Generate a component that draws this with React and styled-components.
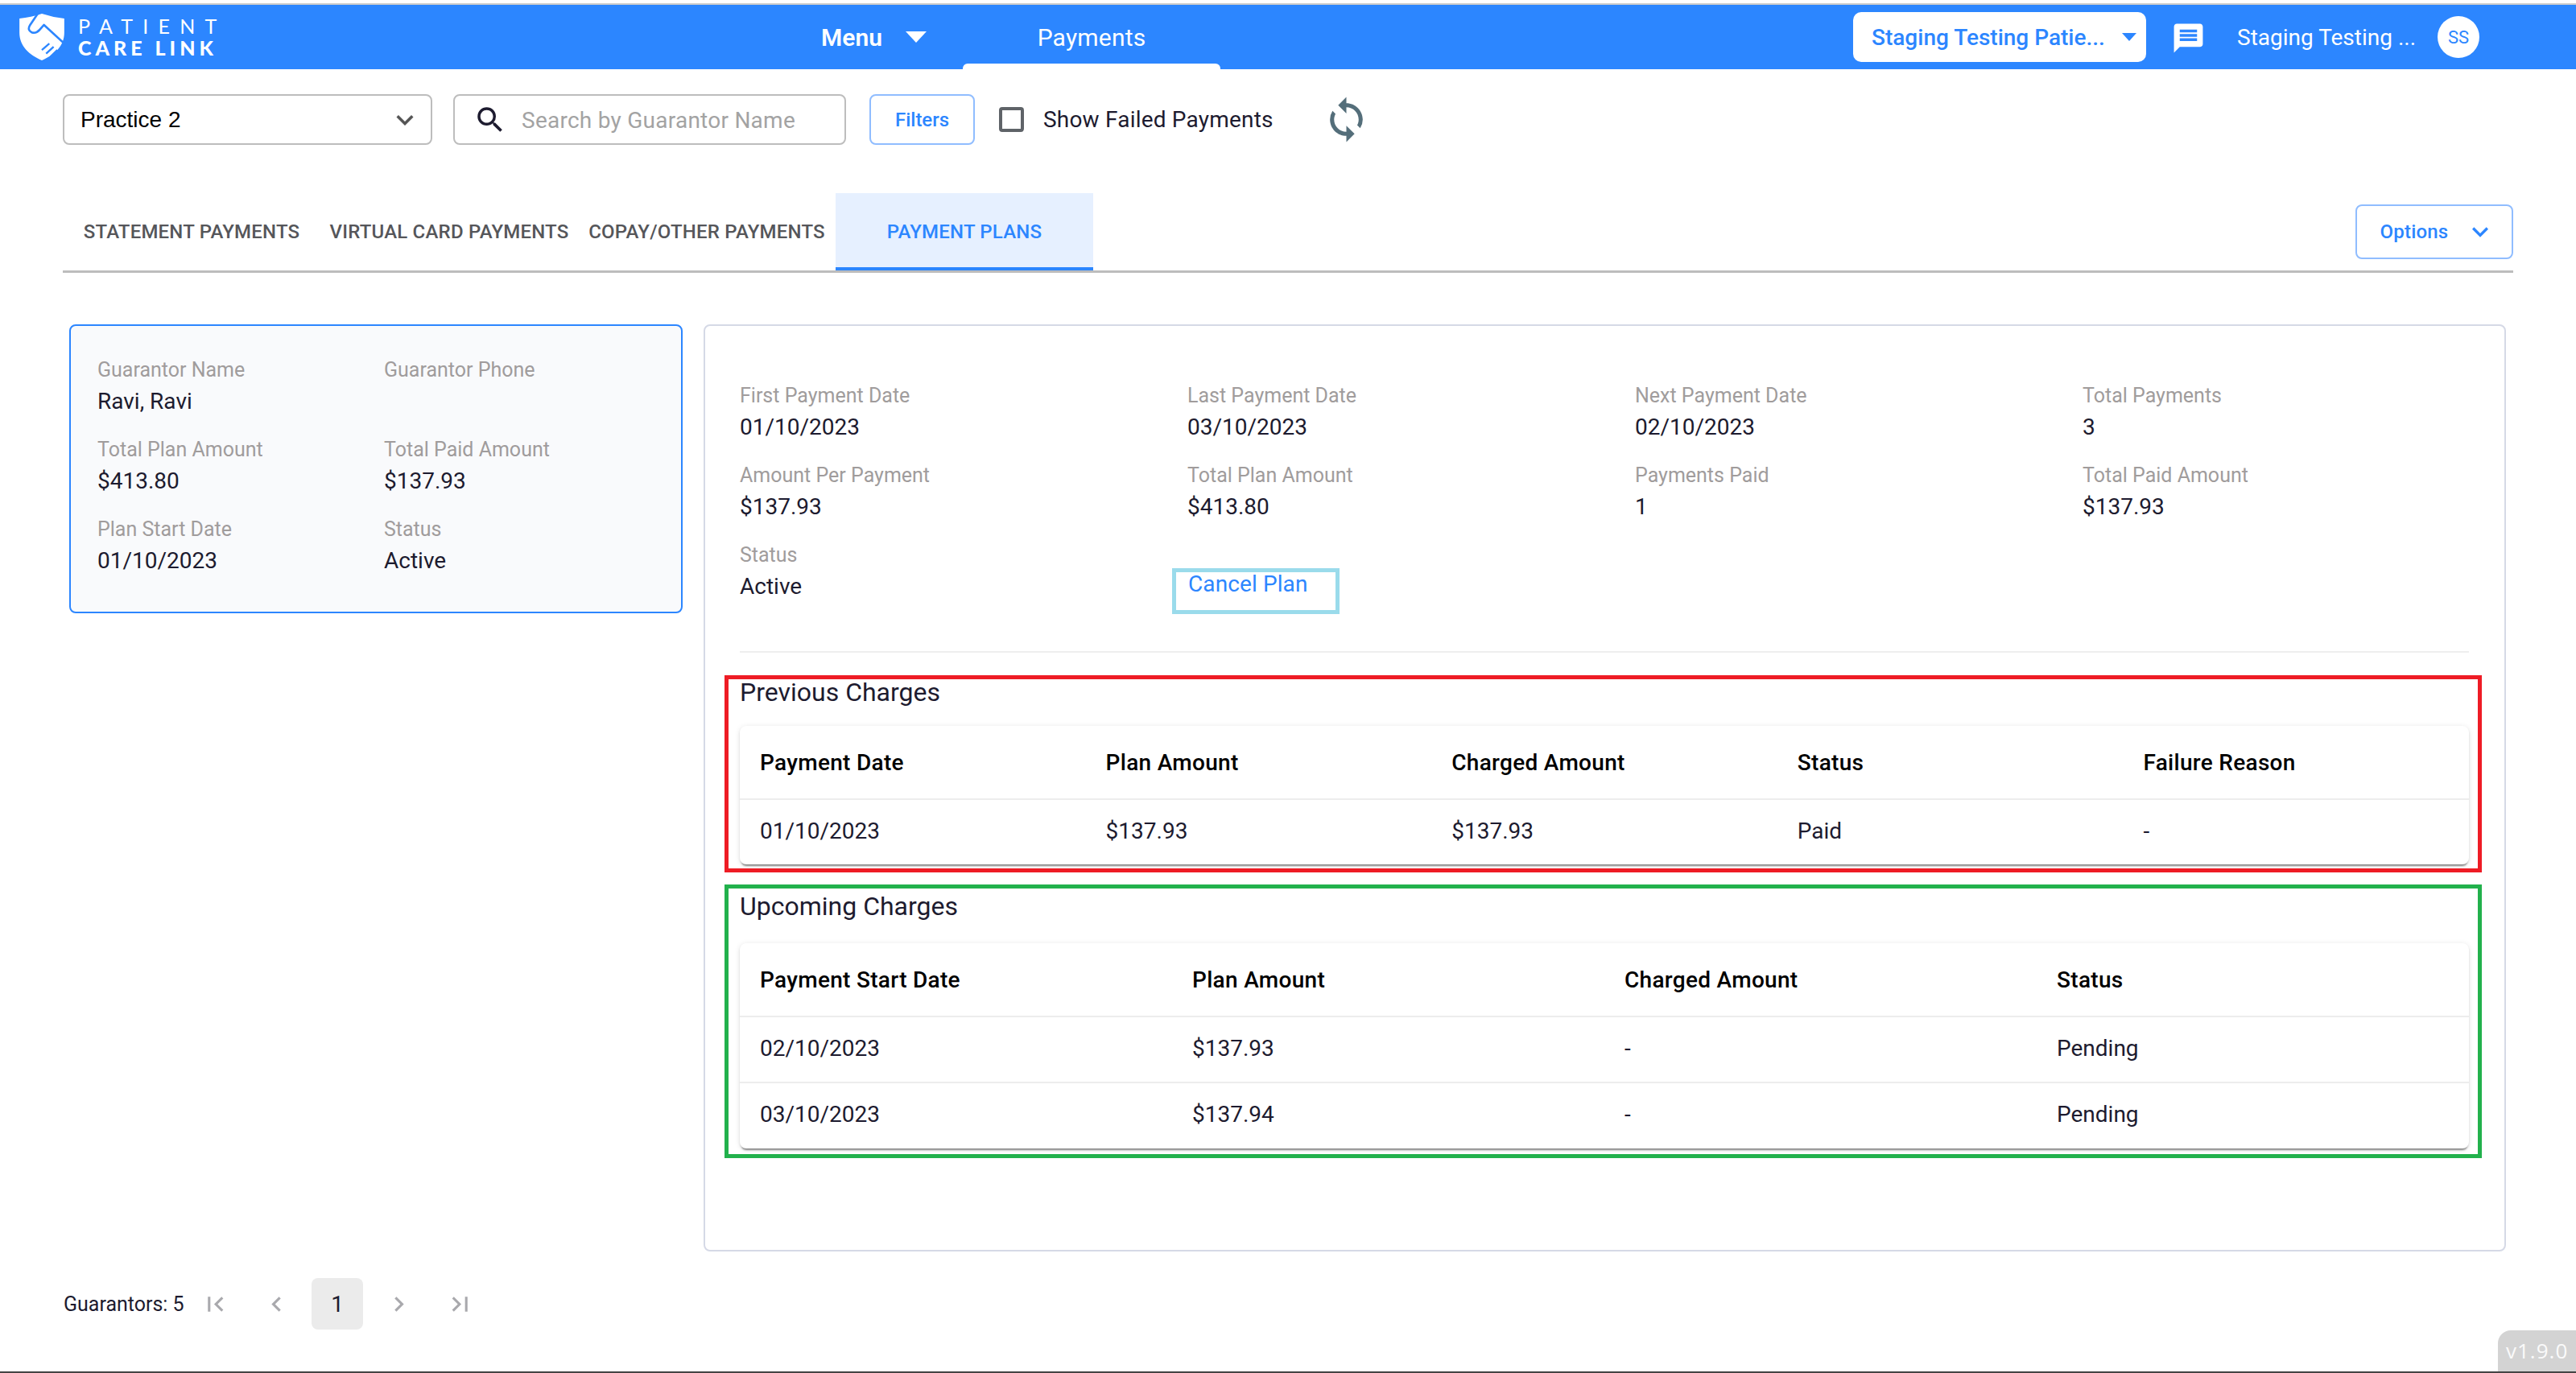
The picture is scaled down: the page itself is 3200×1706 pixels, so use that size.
import React from 'react';
import styled, { createGlobalStyle } from 'styled-components';
import {
  MdExpandMore,
  MdSearch,
  MdSync,
  MdMessage,
  MdFirstPage,
  MdLastPage,
  MdChevronLeft,
  MdChevronRight,
} from 'react-icons/md';

const BLUE = '#2c86ff';
const INK = '#1d1b2f';
const MUTED = '#a09c9c';

const GlobalStyle = createGlobalStyle`
  html, body { margin: 0; padding: 0; background: #fff; }
  * { box-sizing: border-box; }
  body { font-family: Roboto, "Liberation Sans", sans-serif; color: ${INK}; }
`;

const Page = styled.div`
  position: relative;
  width: 3200px;
  height: 1706px;
  padding-top: 4px;
  display: flex;
  flex-direction: column;
  overflow: hidden;
`;

const Header = styled.header`
  height: 82px;
  border-top: 2px solid #ccc;
  background: ${BLUE};
  display: flex;
  align-items: center;
  padding: 0 120px 0 24px;
  color: #fff;
`;

const Logo = styled.div`
  width: 996px;
  display: flex;
  align-items: center;
  gap: 17px;
`;

const LogoText = styled.div`
  font-family: Lato, sans-serif;
  font-size: 25px;
  line-height: 27px;
  color: #fff;
`;

const LogoTop = styled.div`
  font-weight: 400;
  letter-spacing: 12.2px;
`;

const LogoBottom = styled.div`
  font-weight: 900;
  letter-spacing: 5px;
  white-space: nowrap;
`;

const MenuButton = styled.div`
  width: 176px;
  display: flex;
  align-items: center;
  gap: 29px;
  font-size: 30px;
  font-weight: 600;
`;

const Caret = styled.span`
  width: 0;
  height: 0;
  border-left: ${(p) => p.$size}px solid transparent;
  border-right: ${(p) => p.$size}px solid transparent;
  border-top: ${(p) => Math.round(p.$size * 1.1)}px solid ${(p) => p.$color};
`;

const NavTab = styled.div`
  position: relative;
  align-self: stretch;
  width: 320px;
  display: flex;
  align-items: center;
  justify-content: center;
  font-size: 30px;
  letter-spacing: 0.2px;

  &::after {
    content: '';
    position: absolute;
    left: 0;
    right: 0;
    bottom: 0;
    height: 7px;
    background: #fff;
    border-radius: 6px 6px 0 0;
  }
`;

const HeaderRight = styled.div`
  margin-left: auto;
  display: flex;
  align-items: center;
`;

const PatientSelect = styled.div`
  width: 364px;
  height: 62px;
  background: #fff;
  border-radius: 10px;
  color: ${BLUE};
  font-size: 28px;
  font-weight: 500;
  padding: 0 12px 0 23px;
  display: flex;
  align-items: center;
  justify-content: space-between;
  white-space: nowrap;
`;

const ChatIcon = styled(MdMessage)`
  margin: 2px 39px 0 31px;
  flex: none;
`;

const UserName = styled.div`
  font-size: 28px;
  width: 249px;
  white-space: nowrap;
`;

const Avatar = styled.div`
  width: 52px;
  height: 52px;
  border-radius: 50%;
  background: #fff;
  color: ${BLUE};
  font-size: 22px;
  display: flex;
  align-items: center;
  justify-content: center;
`;

const Toolbar = styled.div`
  margin: 31px 0 0;
  padding: 0 78px;
  height: 63px;
  display: flex;
  align-items: center;
`;

const Field = styled.div`
  height: 63px;
  width: ${(p) => p.$width}px;
  margin-right: ${(p) => p.$gap}px;
  border: 2px solid #bdbdbd;
  border-radius: 8px;
  display: flex;
  align-items: center;
  font-size: 28px;
`;

const PracticeField = styled(Field)`
  font-family: "Liberation Sans", Arial, sans-serif;
  color: #000;
  justify-content: space-between;
  padding: 0 11px 0 20px;
`;

const SearchField = styled(Field)`
  padding: 1px 0 0 23px;
  gap: 18px;
  color: #a3a3a3;
  letter-spacing: 0.25px;
`;

const OutlineButton = styled.button`
  width: ${(p) => p.$width}px;
  height: ${(p) => p.$height}px;
  background: #fff;
  border: 2px solid #90bdff;
  border-radius: 8px;
  color: ${BLUE};
  font-family: Roboto, sans-serif;
  font-size: 24px;
  font-weight: 500;
  display: flex;
  align-items: center;
  justify-content: center;
  padding: 0;
`;

const CheckBox = styled.span`
  width: 31px;
  height: 31px;
  margin-left: 30px;
  border: 4px solid #5f6368;
  border-radius: 4px;
`;

const CheckLabel = styled.span`
  margin-left: 24px;
  font-size: 28px;
  letter-spacing: 0.2px;
`;

const SyncIcon = styled(MdSync)`
  margin-left: 60px;
  color: #546e7a;
  flex: none;
`;

const TabRow = styled.div`
  margin: 60px 78px 0;
  width: 3044px;
  height: 99px;
  border-bottom: 3px solid #bdbdbd;
  display: flex;
  align-items: center;
`;

const Tab = styled.div`
  width: 320px;
  height: 96px;
  padding-top: 3px;
  display: flex;
  align-items: center;
  justify-content: center;
  font-size: 24px;
  font-weight: 500;
  letter-spacing: 0.2px;
  color: ${(p) => (p.$active ? BLUE : '#55565a')};
  background: ${(p) => (p.$active ? '#e6f0ff' : 'transparent')};
  border-bottom: 4px solid ${(p) => (p.$active ? BLUE : 'transparent')};
`;

const OptionsButton = styled(OutlineButton)`
  margin-left: auto;
  gap: 20px;
  padding-left: 10px;
  letter-spacing: 0.2px;
`;

const Content = styled.main`
  margin-top: 64px;
  padding: 0 87px 0 86px;
  display: flex;
  align-items: flex-start;
  gap: 26px;
`;

const SummaryCard = styled.section`
  width: 762px;
  height: 359px;
  flex: none;
  padding: 35px 33px 0;
  background: #f9fafc;
  border: 2px solid ${BLUE};
  border-radius: 8px;
  display: grid;
  grid-template-columns: 356px 1fr;
  grid-auto-rows: 99px;
`;

const Label = styled.div`
  font-size: 25px;
  line-height: 39px;
  color: ${MUTED};
  white-space: nowrap;
`;

const Value = styled.div`
  font-size: 28px;
  line-height: 40px;
  color: ${INK};
  white-space: nowrap;
`;

const Panel = styled.section`
  width: 2239px;
  height: 1152px;
  padding: 67px 44px 0 43px;
  border: 2px solid #d5d9e6;
  border-radius: 8px;
`;

const DetailGrid = styled.div`
  display: grid;
  grid-template-columns: repeat(3, 556px) 1fr;
  grid-auto-rows: 99px;
`;

const CancelBox = styled.div`
  width: 208px;
  height: 57px;
  margin: 36px 0 0 -19px;
  padding-left: 15px;
  border: 5px solid #9adbeb;
  color: ${BLUE};
  font-size: 28px;
  line-height: 30px;
  letter-spacing: 0.1px;
`;

const Divider = styled.hr`
  margin: 40px 0 28px;
  border: 0;
  height: 2px;
  background: #eeeeee;
`;

const ChargeBox = styled.div`
  margin: 0 -16px 15px -19px;
  padding: ${(p) => p.$top}px 11px ${(p) => p.$bottom}px 14px;
  border: 5px solid ${(p) => p.$color};
`;

const ChargeTitle = styled.h3`
  margin: 0 0 ${(p) => p.$gap}px;
  font-size: 32px;
  font-weight: 400;
  line-height: 32px;
  color: ${INK};
`;

const TableCard = styled.div`
  background: #fff;
  border-radius: 8px;
  box-shadow: 0 4px 2px -2px rgba(0, 0, 0, 0.38), 0 2px 3px rgba(0, 0, 0, 0.1), 0 1px 7px rgba(0, 0, 0, 0.1);
`;

const Table = styled.table`
  width: 100%;
  table-layout: fixed;
  border-collapse: collapse;
  font-size: 28px;
`;

const HeadCell = styled.th`
  height: ${(p) => p.$height}px;
  padding: 0 0 0 25px;
  text-align: left;
  font-weight: 500;
  letter-spacing: 0.3px;
  color: #000;
  border-bottom: 2px solid #ededed;
`;

const BodyRow = styled.tr`
  &:not(:last-child) td {
    border-bottom: 2px solid #ededed;
  }
`;

const BodyCell = styled.td`
  height: ${(p) => p.$height}px;
  padding: 0 0 4px 25px;
  color: ${INK};
`;

const Pagination = styled.nav`
  margin-top: 33px;
  padding-left: 79px;
  display: flex;
  align-items: center;
  height: 64px;
`;

const PageCount = styled.span`
  width: 156px;
  font-size: 25px;
  color: ${INK};
`;

const PageButton = styled.span`
  width: 64px;
  height: 64px;
  margin-right: 12px;
  border-radius: 8px;
  display: flex;
  align-items: center;
  justify-content: center;
  font-size: 28px;
  color: ${(p) => (p.$current ? INK : '#a9a9ad')};
  background: ${(p) => (p.$current ? '#ebebeb' : 'transparent')};
`;

const Version = styled.div`
  position: absolute;
  right: 0;
  bottom: 2px;
  width: 97px;
  height: 51px;
  padding-left: 10px;
  background: #d3d3d3;
  border-radius: 16px 0 0 0;
  color: #fafafa;
  font-family: "Open Sans", sans-serif;
  font-size: 26px;
  line-height: 50px;
  letter-spacing: 1px;
`;

const BottomLine = styled.div`
  position: absolute;
  left: 0;
  right: 0;
  bottom: 0;
  height: 2px;
  background: #444;
`;

const LogoMark = () => (
  <svg width="56" height="58" viewBox="0 0 168 175">
    <path
      fill="#fff"
      d="M0 18 Q44 14 84 0 Q126 14 168 18 L168 72 C168 122 130 156 84 175 C38 156 0 122 0 72 Z"
    />
    <path
      fill="none"
      stroke={BLUE}
      strokeWidth="8"
      strokeLinejoin="round"
      d="M70 -2 L40 42 Q28 62 46 70 Q62 76 76 60 L92 42 L168 112"
    />
    <path
      fill="none"
      stroke={BLUE}
      strokeWidth="7"
      d="M84 136 L112 112 M100 150 L128 124 M116 162 L142 136"
    />
  </svg>
);

const summary = [
  ['Guarantor Name', 'Ravi, Ravi'],
  ['Guarantor Phone', ''],
  ['Total Plan Amount', '$413.80'],
  ['Total Paid Amount', '$137.93'],
  ['Plan Start Date', '01/10/2023'],
  ['Status', 'Active'],
];

const details = [
  ['First Payment Date', '01/10/2023'],
  ['Last Payment Date', '03/10/2023'],
  ['Next Payment Date', '02/10/2023'],
  ['Total Payments', '3'],
  ['Amount Per Payment', '$137.93'],
  ['Total Plan Amount', '$413.80'],
  ['Payments Paid', '1'],
  ['Total Paid Amount', '$137.93'],
  ['Status', 'Active'],
];

const previousHead = ['Payment Date', 'Plan Amount', 'Charged Amount', 'Status', 'Failure Reason'];
const previousRows = [['01/10/2023', '$137.93', '$137.93', 'Paid', '-']];

const upcomingHead = ['Payment Start Date', 'Plan Amount', 'Charged Amount', 'Status'];
const upcomingRows = [
  ['02/10/2023', '$137.93', '-', 'Pending'],
  ['03/10/2023', '$137.94', '-', 'Pending'],
];

const InfoItem = ({ label, value }) => (
  <div>
    <Label>{label}</Label>
    <Value>{value}</Value>
  </div>
);

const ChargeTable = ({ head, rows, headHeight, rowHeight }) => (
  <TableCard>
    <Table>
      <thead>
        <tr>
          {head.map((h) => (
            <HeadCell key={h} $height={headHeight}>{h}</HeadCell>
          ))}
        </tr>
      </thead>
      <tbody>
        {rows.map((row) => (
          <BodyRow key={row[0]}>
            {row.map((c, i) => (
              <BodyCell key={i} $height={rowHeight}>{c}</BodyCell>
            ))}
          </BodyRow>
        ))}
      </tbody>
    </Table>
  </TableCard>
);

const App = () => {
  return (
    <Page>
      <GlobalStyle />
      <Header>
        <Logo>
          <LogoMark />
          <LogoText>
            <LogoTop>PATIENT</LogoTop>
            <LogoBottom>CARE LINK</LogoBottom>
          </LogoText>
        </Logo>
        <MenuButton>
          Menu
          <Caret $size={13} $color="#fff" />
        </MenuButton>
        <NavTab>Payments</NavTab>
        <HeaderRight>
          <PatientSelect>
            Staging Testing Patie...
            <Caret $size={9} $color={BLUE} />
          </PatientSelect>
          <ChatIcon size={43} color="#fff" />
          <UserName>Staging Testing ...</UserName>
          <Avatar>SS</Avatar>
        </HeaderRight>
      </Header>

      <Toolbar>
        <PracticeField $width={459} $gap={26}>
          Practice 2
          <MdExpandMore size={42} color="#555" />
        </PracticeField>
        <SearchField $width={488} $gap={29}>
          <MdSearch size={42} color={INK} />
          Search by Guarantor Name
        </SearchField>
        <OutlineButton $width={131} $height={63}>Filters</OutlineButton>
        <CheckBox />
        <CheckLabel>Show Failed Payments</CheckLabel>
        <SyncIcon size={61} />
      </Toolbar>

      <TabRow>
        <Tab>STATEMENT PAYMENTS</Tab>
        <Tab>VIRTUAL CARD PAYMENTS</Tab>
        <Tab>COPAY/OTHER PAYMENTS</Tab>
        <Tab $active>PAYMENT PLANS</Tab>
        <OptionsButton $width={196} $height={68}>
          Options
          <MdExpandMore size={40} />
        </OptionsButton>
      </TabRow>

      <Content>
        <SummaryCard>
          {summary.map(([label, value]) => (
            <InfoItem key={label} label={label} value={value} />
          ))}
        </SummaryCard>

        <Panel>
          <DetailGrid>
            {details.map(([label, value]) => (
              <InfoItem key={label} label={label} value={value} />
            ))}
            <CancelBox>Cancel Plan</CancelBox>
          </DetailGrid>
          <Divider />
          <ChargeBox $color="#ee1c25" $top={0} $bottom={5}>
            <ChargeTitle $gap={26}>Previous Charges</ChargeTitle>
            <ChargeTable head={previousHead} rows={previousRows} headHeight={91} rowHeight={81} />
          </ChargeBox>
          <ChargeBox $color="#22b14c" $top={6} $bottom={7}>
            <ChargeTitle $gap={30}>Upcoming Charges</ChargeTitle>
            <ChargeTable head={upcomingHead} rows={upcomingRows} headHeight={91} rowHeight={82} />
          </ChargeBox>
        </Panel>
      </Content>

      <Pagination>
        <PageCount>Guarantors: 5</PageCount>
        <PageButton><MdFirstPage size={37} /></PageButton>
        <PageButton><MdChevronLeft size={37} /></PageButton>
        <PageButton $current>1</PageButton>
        <PageButton><MdChevronRight size={37} /></PageButton>
        <PageButton><MdLastPage size={37} /></PageButton>
      </Pagination>

      <Version>v1.9.0</Version>
      <BottomLine />
    </Page>
  );
};

export default App;
